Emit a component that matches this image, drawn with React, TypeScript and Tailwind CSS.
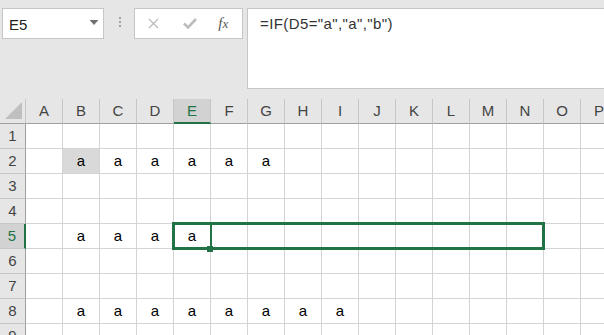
import React from "react";

const COLS = ["A","B","C","D","E","F","G","H","I","J","K","L","M","N","O","P"];
const ROWS = [1,2,3,4,5,6,7,8,9];

const DATA: Record<number, string[]> = {
  2: ["B","C","D","E","F","G"],
  5: ["B","C","D","E"],
  8: ["B","C","D","E","F","G","H","I"],
};

export default function App() {
  return (
    <div
      className="relative w-[604px] h-[335px] overflow-hidden bg-[#e6e6e6] text-[15px]"
      style={{ fontFamily: '"Liberation Sans", Arial, sans-serif' }}
    >
      {/* Top bar */}
      <div className="h-[99px] flex items-start pt-[8px] pl-[2px]">
        {/* Name box */}
        <div className="w-[102px] shrink-0 h-[31px] bg-white border border-[#c6c6c6] flex items-start justify-between pl-[6px] pt-[6px] pr-[5px] leading-[20px] text-[#222]">
          <span>E5</span>
          <svg width="8" height="6" viewBox="0 0 8 6" className="mt-[5px]">
            <rect x="0" y="0" width="8" height="1" fill="#707070" />
            <polygon points="0.5,1 7.5,1 4,5" fill="#707070" />
          </svg>
        </div>
        {/* dots */}
        <div className="w-[30px] shrink-0 h-[31px] flex flex-col items-center pt-[9px] gap-[2px] pl-[1px]">
          <div className="w-[2px] h-[2px] bg-[#a0a0a0]" />
          <div className="w-[2px] h-[2px] bg-[#a0a0a0]" />
          <div className="w-[2px] h-[2px] bg-[#a0a0a0]" />
        </div>
        {/* fx box */}
        <div className="w-[109px] shrink-0 h-[31px] bg-white border border-[#c6c6c6] flex items-center">
          <div className="w-[36px] flex justify-center pl-[2px]">
            <svg width="11" height="11" viewBox="0 0 11 11">
              <path d="M1 1 L10 10 M10 1 L1 10" stroke="#bdbdbd" strokeWidth="1.4" fill="none" />
            </svg>
          </div>
          <div className="w-[36px] flex justify-center pl-[2px]">
            <svg width="14" height="11" viewBox="0 0 14 11">
              <path d="M1 5.5 L5 9.5 L13 1" stroke="#bdbdbd" strokeWidth="2.6" fill="none" />
            </svg>
          </div>
          <div className="w-[36px] flex justify-center pr-[2px]">
            <span
              className="italic text-[#555] text-[15px] leading-[20px]"
              style={{ fontFamily: '"Liberation Serif", "Times New Roman", serif' }}
            >
              f<span className="text-[13px]">x</span>
            </span>
          </div>
        </div>
        {/* formula bar */}
        <div className="ml-[4px] w-[400px] shrink-0 h-[81px] bg-white border border-[#c6c6c6] pl-[12px] pt-[5px] leading-[20px] text-[#333] tracking-[0.4px]">
          =IF(D5="a","a","b")
        </div>
      </div>

      {/* Grid */}
      <div className="bg-white">
        {/* Header row */}
        <div className="flex h-[25px]">
          <div className="w-[26px] shrink-0 h-[25px] bg-[#e6e6e6] border-r border-b border-r-[#c6c6c6] border-b-[#9f9f9f] relative">
            <svg width="17" height="17" viewBox="0 0 17 17" className="absolute left-[5px] top-[3px]">
              <polygon points="17,0 17,17 0,17" fill="#bfbfbf" />
            </svg>
          </div>
          {COLS.map((c) => (
            <div
              key={c}
              className={
                c === "E"
                  ? "w-[37px] shrink-0 h-[25px] bg-[#d2d2d2] border-r border-r-[#c6c6c6] border-b-2 border-b-[#217346] flex items-center justify-center leading-[20px] text-[#217346]"
                  : "w-[37px] shrink-0 h-[25px] bg-[#e6e6e6] border-r border-b border-r-[#c6c6c6] border-b-[#9f9f9f] flex items-center justify-center leading-[20px] text-[#444]"
              }
            >
              {c}
            </div>
          ))}
        </div>
        {ROWS.map((r) => (
          <div key={r} className="flex h-[25px]">
            <div
              className={
                r === 5
                  ? "w-[26px] shrink-0 h-[25px] bg-[#d2d2d2] border-b border-b-[#c6c6c6] border-r-2 border-r-[#217346] flex items-center justify-center leading-[20px] text-[#217346]"
                  : "w-[26px] shrink-0 h-[25px] bg-[#e6e6e6] border-b border-b-[#c6c6c6] border-r border-r-[#9f9f9f] flex items-center justify-center leading-[20px] text-[#444]"
              }
            >
              {r}
            </div>
            {COLS.map((c) => {
              const has = (DATA[r] || []).includes(c);
              const shaded = r === 2 && c === "B";
              return (
                <div
                  key={c}
                  className={
                    shaded
                      ? "w-[37px] shrink-0 h-[25px] bg-[#d9d9d9] border-r border-b border-[#d4d4d4] flex items-center justify-center leading-[20px] text-black"
                      : "w-[37px] shrink-0 h-[25px] bg-white border-r border-b border-[#d4d4d4] flex items-center justify-center leading-[20px] text-black"
                  }
                >
                  {has ? "a" : ""}
                </div>
              );
            })}
          </div>
        ))}
      </div>

      {/* Selection overlay */}
      <div className="absolute left-[172px] top-[222px] w-[373px] h-[28px] border-[3px] border-[#217346]" />
      <div className="absolute left-[210px] top-[222px] w-[2px] h-[28px] bg-[#217346]" />
      <div className="absolute left-[207px] top-[246px] w-[6px] h-[6px] bg-[#217346]" />
    </div>
  );
}
